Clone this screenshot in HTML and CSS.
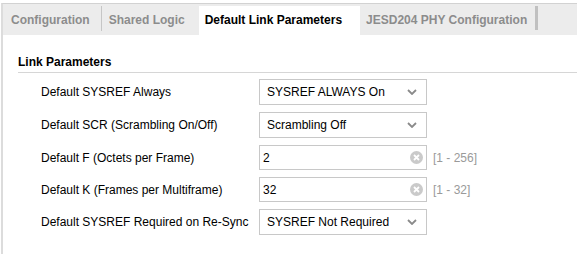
FILE: index.html
```html
<!DOCTYPE html>
<html lang="en">
<head>
    <meta charset="UTF-8">
    <title>JESD204 Link Parameters</title>
    <link rel="stylesheet" href="styles.css">
</head>
<body>

<div class="panel">
    <!-- Tab strip -->
    <div class="tabs">
        <div class="tab sep">Configuration</div>
        <div class="tab second">Shared Logic</div>
        <div class="tab active">Default Link Parameters</div>
        <div class="tab last">JESD204 PHY Configuration</div>
    </div>

    <!-- Link parameters page -->
    <div class="page">
        <div class="group-title">Link Parameters</div>
        <div class="form">
            <div class="label">Default SYSREF Always</div>
            <div class="field">
                <div class="select">SYSREF ALWAYS On
                    <svg class="chev" width="10" height="6" viewBox="0 0 10 6"><path d="M1 1l4 4 4-4" fill="none" stroke="#8a8a8a" stroke-width="1.8"/></svg>
                </div>
            </div>

            <div class="label">Default SCR (Scrambling On/Off)</div>
            <div class="field">
                <div class="select">Scrambling Off
                    <svg class="chev" width="10" height="6" viewBox="0 0 10 6"><path d="M1 1l4 4 4-4" fill="none" stroke="#8a8a8a" stroke-width="1.8"/></svg>
                </div>
            </div>

            <div class="label">Default F (Octets per Frame)</div>
            <div class="field">
                <div class="input">2
                    <svg class="clear" width="13" height="13" viewBox="0 0 13 13"><circle cx="6.5" cy="6.5" r="6.5" fill="#cacaca"/><path d="M4 4l5 5M9 4l-5 5" stroke="#fff" stroke-width="1.8"/></svg>
                </div>
                <span class="range">[1 - 256]</span>
            </div>

            <div class="label">Default K (Frames per Multiframe)</div>
            <div class="field">
                <div class="input">32
                    <svg class="clear" width="13" height="13" viewBox="0 0 13 13"><circle cx="6.5" cy="6.5" r="6.5" fill="#cacaca"/><path d="M4 4l5 5M9 4l-5 5" stroke="#fff" stroke-width="1.8"/></svg>
                </div>
                <span class="range">[1 - 32]</span>
            </div>

            <div class="label">Default SYSREF Required on Re-Sync</div>
            <div class="field">
                <div class="select">SYSREF Not Required
                    <svg class="chev" width="10" height="6" viewBox="0 0 10 6"><path d="M1 1l4 4 4-4" fill="none" stroke="#8a8a8a" stroke-width="1.8"/></svg>
                </div>
            </div>
        </div>
    </div>
</div>

</body>
</html>
```

FILE: styles.css
```css
body {
    margin: 0;
    padding: 0;
    background: #fff;
    font-family: "Liberation Sans", Arial, sans-serif;
    font-size: 12px;
    color: #000;
}

.panel {
    margin-top: 3px;
    margin-left: 1px;
    border-top: 1px solid #d2d2d2;
    border-left: 2px solid #dcdcdc;
    height: 250px;
}

.tabs {
    display: flex;
    align-items: flex-end;
    height: 31px;
    background-color: #ececec;
}

.tab {
    height: 29px;
    line-height: 28px;
    padding: 0 8px 0 7px;
    font-weight: bold;
    color: #8c8c8c;
    box-sizing: border-box;
    position: relative;
}

.tab.sep {
    padding-left: 8px;
    padding-right: 12px;
}

.tab.second {
    padding-right: 14px;
}

.tab.sep::after,
.tab.last::after {
    content: "";
    position: absolute;
    right: 0;
    top: 0;
    height: 25px;
    width: 1px;
    background: #c6c6c6;
}

.tab.last {
    padding-left: 6px;
    padding-right: 11px;
}

.tab.last::after {
    width: 3px;
    height: 24px;
    background: #c0c0c0;
}

.tab.active {
    background: #fff;
    color: #000;
    padding: 0 18px 0 6px;
}

.page {
    padding: 19px 0 0 15px;
}

.group-title {
    font-weight: bold;
    line-height: 16px;
    padding-bottom: 2px;
    border-bottom: 1px solid #d6d6d6;
}

.form {
    display: grid;
    grid-template-columns: 218px auto;
    row-gap: 7px;
    padding: 6px 0 0 23px;
}

.label {
    display: flex;
    align-items: center;
    color: #000;
}

.field {
    display: flex;
    align-items: center;
}

.select,
.input {
    width: 168px;
    box-sizing: border-box;
    border: 1px solid #c8c8c8;
    display: flex;
    align-items: center;
    justify-content: space-between;
}

.select {
    height: 26px;
    padding: 0 9px 0 7px;
}

.input {
    height: 25px;
    padding: 0 3px 0 3px;
}

.range {
    margin-left: 6px;
    color: #9a9a9a;
}
```
